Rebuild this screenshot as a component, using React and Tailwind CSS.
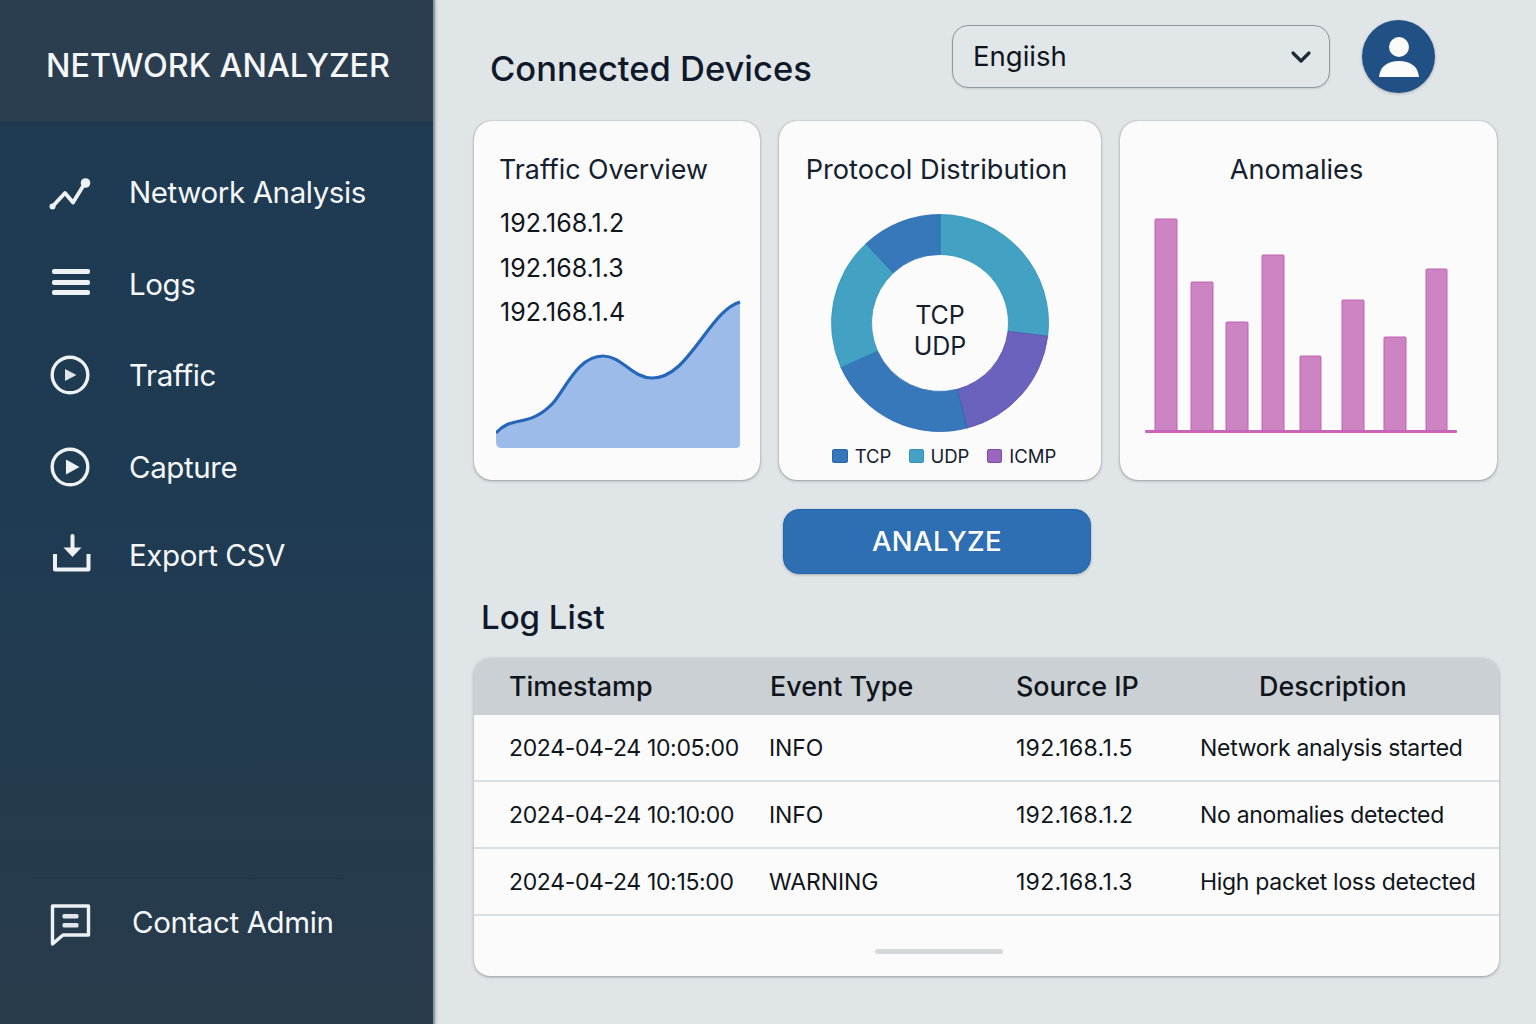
import React from 'react';

const navItems = [
  { label: 'Network Analysis', icon: 'trend', height: 'h-[92px]' },
  { label: 'Logs', icon: 'menu', height: 'h-[91px]' },
  { label: 'Traffic', icon: 'playSmall', height: 'h-[92px]' },
  { label: 'Capture', icon: 'play', height: 'h-[92px]' },
  { label: 'Export CSV', icon: 'export', height: 'h-[84px]' },
];

const logs = [
  ['2024-04-24 10:05:00', 'INFO', '192.168.1.5', 'Network analysis started'],
  ['2024-04-24 10:10:00', 'INFO', '192.168.1.2', 'No anomalies detected'],
  ['2024-04-24 10:15:00', 'WARNING', '192.168.1.3', 'High packet loss detected'],
];

const bars = [
  [1155, 219, 22],
  [1191, 282, 22],
  [1226, 322, 22],
  [1262, 255, 22],
  [1300, 356, 21],
  [1342, 300, 22],
  [1384, 337, 22],
  [1426, 269, 21],
];

const slices = [
  [0, 97, '#43a2c4', '#2f93b8'],
  [97, 165.5, '#6b62bd', '#5a4fb3'],
  [165.5, 246, '#3778bb', '#2468ae'],
  [246, 317, '#43a2c4', '#2f93b8'],
  [317, 360, '#3778bb', '#2468ae'],
];

const areaLine =
  'M496 433C503 425 510 423 520 421C530 419 541 416 553 403C566 388 578 356 603 356C622 356 632 378 652 378C672 378 685 361 703 337C717 318 727 306 740 302';

function polar(r, deg) {
  const a = (deg * Math.PI) / 180;
  return [120 + r * Math.sin(a), 120 - r * Math.cos(a)];
}

function slicePath(start, end) {
  const R = 108.5;
  const r = 68.5;
  const [x1, y1] = polar(R, start);
  const [x2, y2] = polar(R, end);
  const [x3, y3] = polar(r, end);
  const [x4, y4] = polar(r, start);
  const large = end - start > 180 ? 1 : 0;
  return `M${x1} ${y1}A${R} ${R} 0 ${large} 1 ${x2} ${y2}L${x3} ${y3}A${r} ${r} 0 ${large} 0 ${x4} ${y4}Z`;
}

function NavIcon({ name }) {
  if (name === 'trend') {
    return (
      <svg width="44" height="36" viewBox="0 0 44 36" fill="none">
        <path d="M4.5 32.5 17 19l8 9.5L37 9" stroke="#eef2f5" strokeWidth="3.8" strokeLinecap="round" strokeLinejoin="round" />
        <circle cx="4.5" cy="32.5" r="3" fill="#eef2f5" />
        <circle cx="37.5" cy="9" r="4.8" fill="#eef2f5" />
      </svg>
    );
  }
  if (name === 'menu') {
    return (
      <svg width="44" height="36" viewBox="0 0 44 36" fill="#eef2f5">
        <rect x="4" y="3" width="38" height="5" rx="2" />
        <rect x="4" y="14" width="38" height="5" rx="2" />
        <rect x="4" y="24" width="38" height="5" rx="2" />
      </svg>
    );
  }
  if (name === 'playSmall' || name === 'play') {
    return (
      <svg width="44" height="44" viewBox="0 0 44 44" fill="none">
        <circle cx="22" cy="22" r="17.8" stroke="#eef2f5" strokeWidth="3.4" />
        {name === 'play' ? (
          <path d="M18 14.5 31.5 22 18 29.5Z" fill="#eef2f5" />
        ) : (
          <path d="M17 16 28.5 22 17 28Z" fill="#dfe5ea" />
        )}
      </svg>
    );
  }
  if (name === 'export') {
    return (
      <svg width="44" height="44" viewBox="0 0 44 44" fill="none">
        <path d="M7 21v15.5h33.5V21" stroke="#eef2f5" strokeWidth="4" strokeLinejoin="round" />
        <path d="M24.5 3v14" stroke="#eef2f5" strokeWidth="4" strokeLinecap="round" />
        <path d="M15.5 14.5h18L24.5 24Z" fill="#eef2f5" />
      </svg>
    );
  }
  return (
    <svg width="44" height="44" viewBox="0 0 44 44" fill="none">
      <path d="M3.5 3h36v29H14L3.5 41Z" stroke="#eef2f5" strokeWidth="3.4" strokeLinejoin="round" />
      <rect x="13.5" y="11" width="16" height="4.5" rx="1.5" fill="#dfe5ea" />
      <rect x="13.5" y="20" width="16" height="4.5" rx="1.5" fill="#dfe5ea" />
    </svg>
  );
}

function Sidebar() {
  return (
    <aside className="w-[435px] h-[1024px] shrink-0 flex flex-col bg-gradient-to-b from-[#1e3b53] via-[#1f3b52] to-[#283b4b] border-r-2 border-[#8c99a3] text-[#f5f7f9] shadow-[1px_0_3px_rgba(0,0,0,0.2)]">
      <div className="h-[123px] shrink-0 flex items-center pl-[46px] pt-[11px] bg-[#2b3e4f] border-b border-[#1c3447]">
        <h1 className="text-[32.3px] font-medium whitespace-nowrap">NETWORK ANALYZER</h1>
      </div>
      <nav className="pt-[23px] flex flex-col">
        {navItems.map((item) => (
          <div key={item.label} className={`${item.height} flex items-center`}>
            <div className="w-[130px] pl-[48px] shrink-0 flex items-center">
              <NavIcon name={item.icon} />
            </div>
            <span className="-ml-px pt-[2px] text-[29.5px] tracking-[-0.4px] leading-none whitespace-nowrap">{item.label}</span>
          </div>
        ))}
      </nav>
      <div className="mt-auto mb-[77px] ml-[32px] w-[311px] border-t border-[#1f3446] pt-[24px] flex items-center">
        <div className="w-[100px] pl-[17px] shrink-0">
          <NavIcon name="chat" />
        </div>
        <span className="text-[29.5px] tracking-[-0.4px] leading-none whitespace-nowrap pb-[4px]">Contact Admin</span>
      </div>
    </aside>
  );
}

function Card({ className, children }) {
  return (
    <section className={`h-[359px] bg-[#fbfbfb] rounded-[18px] shadow-[0_0_1px_rgba(70,80,90,0.6),0_1px_3px_rgba(70,80,90,0.45)] ${className}`}>
      {children}
    </section>
  );
}

function TrafficCard() {
  return (
    <Card className="w-[286px] flex flex-col">
      <h2 className="ml-[25px] mt-[30px] text-[26.8px] leading-[36px] text-[#14202e] whitespace-nowrap">Traffic Overview</h2>
      <div className="ml-[26px] mt-[14px] flex flex-col text-[25px] leading-[44.5px] text-[#10151c]">
        <span>192.168.1.2</span>
        <span>192.168.1.3</span>
        <span>192.168.1.4</span>
      </div>
      <svg className="ml-[22px] mt-[-36.5px]" width="246" height="152" viewBox="496 298 246 152" fill="none">
        <path d={`${areaLine}V444Q740 448 736 448H502Q496 448 496 442Z`} fill="#9cbbe9" />
        <path d={areaLine} stroke="#2666b8" strokeWidth="3.2" />
      </svg>
    </Card>
  );
}

function ProtocolCard() {
  return (
    <Card className="w-[322px] flex flex-col items-center relative">
      <h2 className="mt-[31px] mr-[7px] text-[27.2px] leading-[36px] text-[#14202e] whitespace-nowrap">Protocol Distribution</h2>
      <div className="relative mt-[15px] w-[240px] h-[240px] shrink-0">
        <svg width="240" height="240" viewBox="0 0 240 240">
          {slices.map(([start, end, fill, stroke]) => (
            <path key={start} d={slicePath(start, end)} fill={fill} stroke={stroke} strokeWidth="0.8" />
          ))}
        </svg>
        <div className="absolute inset-0 flex flex-col items-center justify-center text-[25px] leading-[31px] text-[#14202e] pt-[16px]">
          <span>TCP</span>
          <span>UDP</span>
        </div>
      </div>
      <div className="mt-[4px] ml-[8px] flex items-center text-[18.5px] leading-none text-[#14202e]">
        <i className="w-[16px] h-[14px] rounded-[2px] bg-[#3778bb] border border-[#2468ae] mr-[7px]" />
        <span className="mr-[18px]">TCP</span>
        <i className="w-[15px] h-[14px] rounded-[2px] bg-[#43a2c4] border border-[#2f93b8] mr-[6px]" />
        <span className="mr-[18px]">UDP</span>
        <i className="w-[15px] h-[14px] rounded-[2px] bg-[#9a66bd] border border-[#7f4fa8] mr-[7px]" />
        <span>ICMP</span>
      </div>
    </Card>
  );
}

function AnomaliesCard() {
  return (
    <Card className="w-[377px] ml-px flex flex-col items-center">
      <h2 className="mt-[31px] mr-[24px] text-[27.2px] leading-[36px] text-[#14202e] whitespace-nowrap">Anomalies</h2>
      <svg className="mt-[28px] self-start ml-[25px]" width="314" height="218" viewBox="1145 216 314 218">
        {bars.map(([x, y, w]) => (
          <rect key={x} x={x} y={y} width={w} height={431 - y} rx="1" fill="#cc84c2" stroke="#c163b3" strokeWidth="1" />
        ))}
        <rect x="1145" y="430" width="312" height="3" rx="1" fill="#c766b8" />
      </svg>
    </Card>
  );
}

function LogTable() {
  return (
    <div className="w-[1025px] h-[318px] bg-[#fbfbfb] rounded-[16px] shadow-[0_1px_3px_rgba(70,80,90,0.5)] overflow-hidden flex flex-col">
      <div className="h-[57px] bg-[#cad0d4] grid grid-cols-[295px_247px_184px_1fr] items-center text-[26.9px] font-medium text-[#10151c] shrink-0">
        <span className="pl-[35px]">Timestamp</span>
        <span className="pl-[1px]">Event Type</span>
        <span>Source IP</span>
        <span className="pl-[59px]">Description</span>
      </div>
      {logs.map((row) => (
        <div key={row[0]} className="h-[67px] pt-px border-b-2 border-[#d9dee1] grid grid-cols-[295px_247px_184px_1fr] items-center text-[23px] text-[#10151c] shrink-0">
          <span className="pl-[35px] tracking-[-0.35px] whitespace-nowrap">{row[0]}</span>
          <span className="tracking-[-0.1px]">{row[1]}</span>
          <span className="tracking-[0.27px] whitespace-nowrap">{row[2]}</span>
          <span className="tracking-[-0.3px] whitespace-nowrap">{row[3]}</span>
        </div>
      ))}
      <div className="flex-1 flex items-center justify-center pr-[100px] pt-[11px]">
        <div className="w-[128px] h-[5px] rounded-full bg-[#d3d8db] ml-[4px]" />
      </div>
    </div>
  );
}

export default function App() {
  return (
    <div className="w-[1536px] h-[1024px] flex overflow-hidden bg-[#e0e5e8] font-['Inter',sans-serif]">
      <Sidebar />
      <main className="flex-1 pl-[39px] flex flex-col">
        <header className="h-[121px] shrink-0 flex items-start">
          <h1 className="ml-[16px] mt-[47px] w-[462px] text-[34.5px] leading-[44px] font-medium text-[#10192a] whitespace-nowrap">Connected Devices</h1>
          <div className="mt-[25px] w-[378px] h-[63px] rounded-[16px] border border-[#8f989e] bg-[#e1e6e9] shadow-[0_1px_2px_rgba(0,0,0,0.12)] flex items-center justify-between pl-[20px] pr-[17px]">
            <span className="text-[27.5px] pt-px text-[#10151c]">Engiish</span>
            <svg width="22" height="14" viewBox="0 0 22 14" fill="none">
              <path d="M3 3l8 8 8-8" stroke="#1d2a38" strokeWidth="3.2" strokeLinecap="round" strokeLinejoin="round" />
            </svg>
          </div>
          <div className="ml-[32px] mt-[20px] w-[73px] h-[73px] pt-[3px] rounded-full bg-[#215184] shadow-[0_1px_3px_rgba(0,0,0,0.25)] flex items-center justify-center">
            <svg width="42" height="44" viewBox="0 0 42 44" fill="#fbfbfb">
              <circle cx="21" cy="11" r="10" />
              <path d="M1 41C2 30 10 25 21 25s19 5 20 16Z" />
            </svg>
          </div>
        </header>
        <div className="flex gap-[19px]">
          <TrafficCard />
          <ProtocolCard />
          <div className="-ml-px">
            <AnomaliesCard />
          </div>
        </div>
        <button className="mt-[29px] ml-[309px] w-[308px] h-[65px] pt-px rounded-[16px] bg-[#2e6fb4] border border-[#1f64ae] shadow-[0_1px_3px_rgba(0,0,0,0.25)] text-[#ffffff] text-[27.5px] font-medium tracking-[0.4px]">
          ANALYZE
        </button>
        <h2 className="ml-[7px] mt-[22px] text-[33px] leading-[42px] font-medium text-[#10192a]">Log List</h2>
        <div className="mt-[20px]">
          <LogTable />
        </div>
      </main>
    </div>
  );
}
